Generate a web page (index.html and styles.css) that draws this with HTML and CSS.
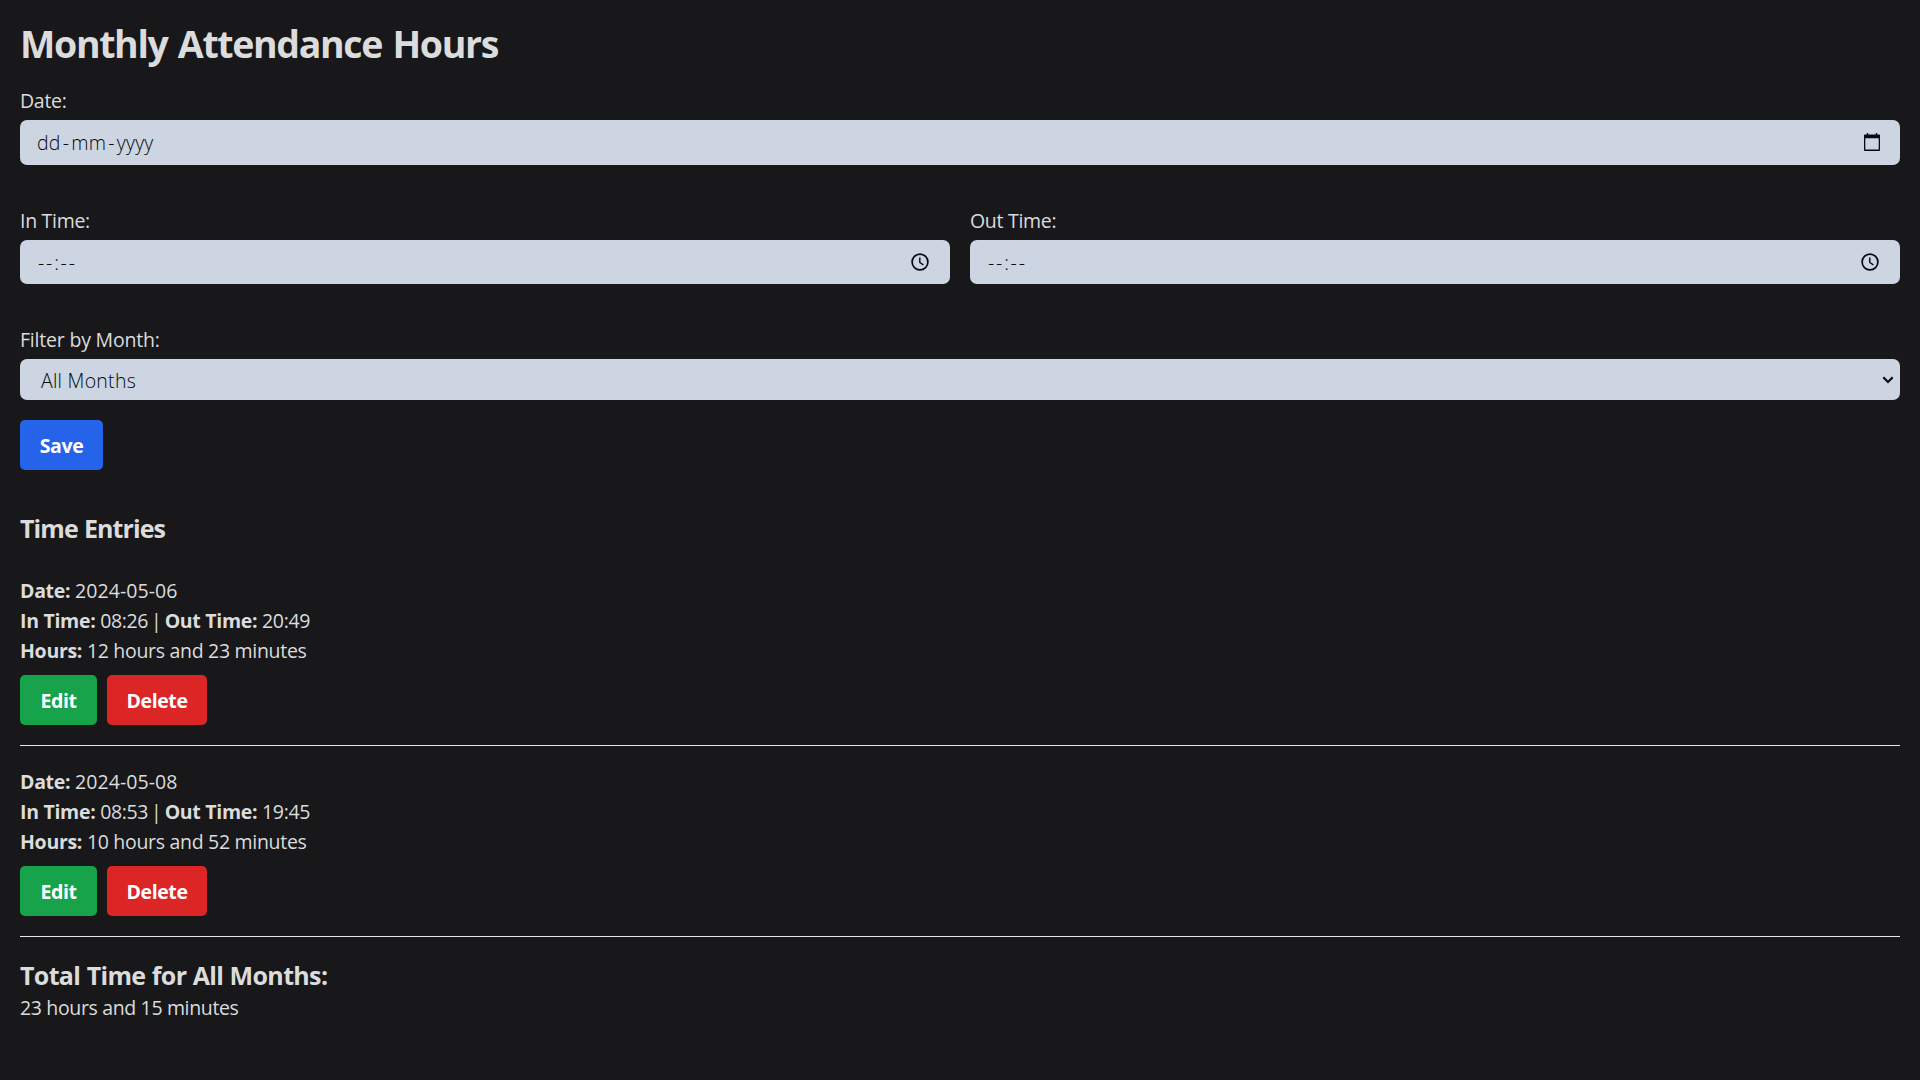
FILE: index.html
```html
<!DOCTYPE html>
<html lang="en">
<head>
<meta charset="utf-8">
<title>Monthly Attendance Hours</title>
<link rel="stylesheet" href="styles.css">
</head>
<body>
<main class="page">
  <h1 class="title">Monthly Attendance Hours</h1>
  <form class="form">
    <div class="field">
      <label class="label">Date:</label>
      <div class="control control-date">
        <span>dd<i class="dash">-</i>mm<i class="dash">-</i>yyyy</span>
        <svg class="icon-date" width="20" height="20" viewBox="0 0 20 20"><path d="M3 2.600h14a1 1 0 0 1 1 1V18a1 1 0 0 1-1 1H3a1 1 0 0 1-1-1V3.600a1 1 0 0 1 1-1zM3.300 6.300v11.300h13.400V6.300z" fill="#05080f" fill-rule="evenodd"/><path d="M5.500 1v2M14.500 1v2" stroke="#05080f" stroke-width="1.500"/></svg>
      </div>
    </div>
    <div class="row">
      <div class="field">
        <label class="label">In Time:</label>
        <div class="control">
          <span class="time-text">--:--</span>
          <svg class="icon-time" width="20" height="20" viewBox="0 0 20 20"><circle cx="10" cy="10" r="7.900" fill="none" stroke="#05080f" stroke-width="1.700"/><path d="M9.800 5.500v5l3.600 2.400" fill="none" stroke="#05080f" stroke-width="1.400"/></svg>
        </div>
      </div>
      <div class="field">
        <label class="label">Out Time:</label>
        <div class="control">
          <span class="time-text">--:--</span>
          <svg class="icon-time" width="20" height="20" viewBox="0 0 20 20"><circle cx="10" cy="10" r="7.900" fill="none" stroke="#05080f" stroke-width="1.700"/><path d="M9.800 5.500v5l3.600 2.400" fill="none" stroke="#05080f" stroke-width="1.400"/></svg>
        </div>
      </div>
    </div>
    <div class="field">
      <label class="label label-filter">Filter by Month:</label>
      <div class="control control-select">
        <span class="select-text">All Months</span>
        <svg width="12" height="8" viewBox="0 0 12 8"><path d="M1.300 1.300L6 6l4.700-4.700" fill="none" stroke="#05080f" stroke-width="2.200"/></svg>
      </div>
    </div>
    <button class="btn btn-save" type="button">Save</button>
  </form>
  <section>
    <h2 class="subtitle entries-title">Time Entries</h2>
    <article class="entry">
      <p><b>Date:</b> <span class="date-value">2024-05-06</span></p>
      <p><b>In Time:</b> <span class="time-value">08:26</span> <span class="bar">|</span> <b>Out Time:</b> <span class="time-value">20:49</span></p>
      <p><b>Hours:</b> 12 hours and 23 minutes</p>
      <div class="actions"><button class="btn btn-edit" type="button">Edit</button><button class="btn btn-delete" type="button">Delete</button></div>
    </article>
    <article class="entry">
      <p><b>Date:</b> <span class="date-value">2024-05-08</span></p>
      <p><b>In Time:</b> <span class="time-value">08:53</span> <span class="bar">|</span> <b>Out Time:</b> <span class="time-value">19:45</span></p>
      <p><b>Hours:</b> 10 hours and 52 minutes</p>
      <div class="actions"><button class="btn btn-edit" type="button">Edit</button><button class="btn btn-delete" type="button">Delete</button></div>
    </article>
  </section>
  <section class="total">
    <h2 class="subtitle">Total Time for All Months:</h2>
    <p class="total-value">23 hours and 15 minutes</p>
  </section>
</main>
</body>
</html>
```
FILE: styles.css
```css
* { box-sizing: border-box; margin: 0; padding: 0; }
body {
  min-height: 100vh;
  background: #18181a;
  color: #dcdcdc;
  font-family: "Open Sans", "Noto Sans", sans-serif;
  font-size: 19.500px;
  line-height: 30px;
  letter-spacing: -0.3px;
}
.page { padding: 20px; }
.title { font-size: 37.500px; line-height: 47px; font-weight: 700; letter-spacing: -1.350px; word-spacing: 2px; margin-bottom: 18px; }
.form { display: flex; flex-direction: column; align-items: stretch; }
.form .btn { align-self: flex-start; }
.field { flex: 1; }
.label { display: block; line-height: 32px; margin-bottom: 3px; }
.label-filter { letter-spacing: -0.2px; }
.row { display: flex; gap: 20px; margin: 40px 0; }
.control {
  display: flex;
  align-items: center;
  justify-content: space-between;
  height: 44px;
  padding: 0 20px 0 17px;
  border-radius: 7px;
  background: #ccd5e1;
  color: #05080f;
  font-weight: 340;
  letter-spacing: 0.250px;
}
.control-date { height: 45px; padding-right: 18px; }
.control-select { height: 41px; padding: 0 6px 0 21px; }
.icon-date { margin-bottom: 2px; }
.icon-time { margin-bottom: 1px; }
.dash { font-style: normal; margin: 0 2px; }
.time-text { padding: 2px 0 0 1px; letter-spacing: 1.800px; }
.select-text { padding-top: 2px; }
.btn {
  height: 50px;
  padding-top: 2px;
  border: 0;
  border-radius: 5px;
  color: #fff;
  font: 700 19.500px/30px "Open Sans", "Noto Sans", sans-serif;
  letter-spacing: -0.4px;
}
.btn-save { width: 83px; margin-top: 20px; background: #2563eb; }
.btn-edit { width: 77px; background: #16a34a; }
.btn-delete { width: 100px; background: #dc2626; }
.subtitle { font-size: 25px; line-height: 35px; font-weight: 700; letter-spacing: -0.650px; word-spacing: 0.500px; }
.entries-title { margin: 41px 0 9px; letter-spacing: -0.900px; }
.entry { padding: 21px 0 20px; border-bottom: 1px solid #e5e7eb; }
.date-value { letter-spacing: 0.070px; }
.time-value { letter-spacing: -0.350px; }
.bar { margin: 0 -1.500px 0 -2px; }
.actions { display: flex; gap: 10px; margin-top: 9px; }
.total { padding-top: 21px; }
.total-value { letter-spacing: -0.350px; }
```
